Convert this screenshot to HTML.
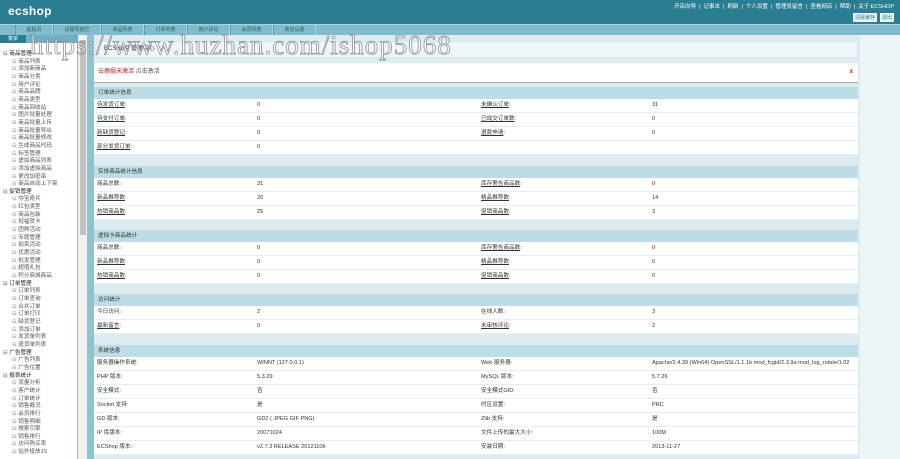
<!DOCTYPE html>
<html><head><meta charset="utf-8"><style>
*{margin:0;padding:0;box-sizing:border-box}
body{width:900px;height:459px;overflow:hidden;background:#eef5f8;font-family:"Liberation Sans","Noto Sans CJK SC",sans-serif;font-size:5.5px;color:#333;position:relative}
.hd{position:absolute;left:0;top:0;width:900px;height:24px;background:#2b7e91}
.logo{position:absolute;left:8px;top:4px;color:#fff;font-size:12px;font-weight:bold;letter-spacing:.3px}
.tl{position:absolute;right:6px;top:2px;color:#fff;font-size:5.5px}
.tl span{margin:0 3px}
.btns{position:absolute;right:6px;top:13px}
.btns b{display:inline-block;background:#e8f2f5;color:#2b7e91;font-weight:normal;font-size:5px;padding:1px 2px;margin-left:3px}
.nav{position:absolute;left:0;top:24px;width:900px;height:11px;background:#80bccb;border-top:1px solid #a8d4df}
.nav span{position:absolute;top:0;height:10px;line-height:10px;text-align:center;color:#2b5b66;font-size:5px;border-left:1px solid #5c9fb0;border-right:1px solid #a8d4df}
.side{position:absolute;left:0;top:35px;width:78px;height:424px;background:#fff;border-right:1px solid #8bbfcc}
.stab{position:absolute;left:0;top:35px;width:26px;height:8px;background:#2b7e91;color:#fff;font-size:5px;text-align:center;line-height:8px}
.sband{position:absolute;left:0;top:35px;width:78px;height:8px;background:#6fb1c1;z-index:0}
.tree{position:absolute;left:3px;top:51px;line-height:7.65px;font-size:5.6px;color:#444;white-space:nowrap}
.tree div.g{color:#222}
.tree div.g:before{content:"⊟ ";color:#666}
.tree div.i{padding-left:9px;color:#555}
.tree div.i:before{content:"⊟ ";color:#999}
.sb{position:absolute;left:79px;top:35px;width:8px;height:424px;background:#f0f0f0}
.thumb{position:absolute;left:80px;top:40px;width:6px;height:195px;background:#c0c0c0}
.band{position:absolute;left:87px;top:35px;width:7px;height:424px;background:#8cc4d2}
.main{position:absolute;left:94px;top:35px;width:766px;height:424px;background:#dcecf1}
.title{position:absolute;left:97px;top:41px;width:761px;height:17px;background:#eef6f9;border:1px solid #d4e7ed;padding-left:6px;line-height:15px;font-size:6px;color:#333}
.alert{position:absolute;left:94px;top:63px;width:764px;height:20px;background:#fff;border-bottom:1px solid #aaa;padding-left:4px;line-height:19px;font-size:6px;color:#555}
.alert em{font-style:normal;color:#b42020}
.alert i{position:absolute;right:5px;top:0;font-style:normal;color:#b42020;font-weight:bold}
.sec{position:absolute;left:94px;width:764px;background:#dcecf1}
.sh{height:13px;background:#bcdde6;line-height:13px;padding-left:4px;color:#333;font-size:5.6px;border-top:1px solid #d6eaf0}
.row{height:14px;background:#fff;border-bottom:1px solid #e4eff3;position:relative;line-height:13px;font-size:5.6px}
.row span{position:absolute;top:0}
.a{left:3px}.b{left:163px}.c{left:387px}.d{left:558px}
u{text-decoration:underline;color:#333}
.r{color:#c00}
.rm{position:absolute;left:860px;top:35px;width:40px;height:424px;background:#eef5f8}
.wm{position:absolute;left:30px;top:30px;font-family:"Liberation Serif",serif;font-size:27px;color:rgba(255,255,255,.5);-webkit-text-stroke:.7px #888;letter-spacing:1px;white-space:nowrap;z-index:10}
</style></head><body>
<div class="hd"><div class="logo">ecshop</div>
<div class="tl">开店向导<span>|</span>记事本<span>|</span>刷新<span>|</span>个人设置<span>|</span>管理员留言<span>|</span>查看网店<span>|</span>帮助<span>|</span>关于 ECSHOP</div>
<div class="btns"><b>清除缓存</b><b>退出</b></div></div>
<div class="nav">
<span style="left:15px;width:38px">起始页</span><span style="left:53px;width:48px">设置导航栏</span><span style="left:101px;width:43px">商品列表</span><span style="left:144px;width:43px">订单列表</span><span style="left:187px;width:43px">用户评论</span><span style="left:230px;width:43px">会员列表</span><span style="left:273px;width:43px">商店设置</span></div>
<div class="side"></div>
<div class="sband"></div>
<div class="stab">菜单</div>
<div class="tree">
<div class="g">商品管理</div><div class="i">商品列表</div><div class="i">添加新商品</div><div class="i">商品分类</div><div class="i">用户评论</div><div class="i">商品品牌</div><div class="i">商品类型</div><div class="i">商品回收站</div><div class="i">图片批量处理</div><div class="i">商品批量上传</div><div class="i">商品批量导出</div><div class="i">商品批量修改</div><div class="i">生成商品代码</div><div class="i">标签管理</div><div class="i">虚拟商品列表</div><div class="i">添加虚拟商品</div><div class="i">更改加密串</div><div class="i">商品自动上下架</div>
<div class="g">促销管理</div><div class="i">夺宝奇兵</div><div class="i">红包类型</div><div class="i">商品包装</div><div class="i">祝福贺卡</div><div class="i">团购活动</div><div class="i">专题管理</div><div class="i">拍卖活动</div><div class="i">优惠活动</div><div class="i">批发管理</div><div class="i">超值礼包</div><div class="i">积分商城商品</div>
<div class="g">订单管理</div><div class="i">订单列表</div><div class="i">订单查询</div><div class="i">合并订单</div><div class="i">订单打印</div><div class="i">缺货登记</div><div class="i">添加订单</div><div class="i">发货单列表</div><div class="i">退货单列表</div>
<div class="g">广告管理</div><div class="i">广告列表</div><div class="i">广告位置</div>
<div class="g">报表统计</div><div class="i">流量分析</div><div class="i">客户统计</div><div class="i">订单统计</div><div class="i">销售概况</div><div class="i">会员排行</div><div class="i">销售明细</div><div class="i">搜索引擎</div><div class="i">销售排行</div><div class="i">访问购买率</div><div class="i">站外投放JS</div>
</div>
<div class="sb"></div><div class="thumb"></div>
<div class="band"></div>
<div class="main"></div>
<div class="rm"></div>
<div class="title">ECSHOP 管理中心</div>
<div class="alert"><em>云摘掘未激活</em> 点击激活<i>x</i></div>

<div class="sec" style="top:86px"><div class="sh">订单统计信息</div>
<div class="row"><span class="a"><u>待发货订单</u>:</span><span class="b r">0</span><span class="c"><u>未确认订单</u>:</span><span class="d">31</span></div>
<div class="row"><span class="a"><u>待支付订单</u>:</span><span class="b">0</span><span class="c"><u>已成交订单数</u>:</span><span class="d">0</span></div>
<div class="row"><span class="a"><u>新缺货登记</u>:</span><span class="b">0</span><span class="c"><u>退款申请</u>:</span><span class="d">0</span></div>
<div class="row"><span class="a"><u>部分发货订单</u>:</span><span class="b">0</span></div></div>

<div class="sec" style="top:165px"><div class="sh">实体商品统计信息</div>
<div class="row"><span class="a">商品总数:</span><span class="b">31</span><span class="c"><u>库存警告商品数</u>:</span><span class="d r">0</span></div>
<div class="row"><span class="a"><u>新品推荐数</u>:</span><span class="b">20</span><span class="c"><u>精品推荐数</u>:</span><span class="d">14</span></div>
<div class="row"><span class="a"><u>热销商品数</u>:</span><span class="b">25</span><span class="c"><u>促销商品数</u>:</span><span class="d">3</span></div></div>

<div class="sec" style="top:229px"><div class="sh">虚拟卡商品统计</div>
<div class="row"><span class="a">商品总数:</span><span class="b">0</span><span class="c"><u>库存警告商品数</u>:</span><span class="d r">0</span></div>
<div class="row"><span class="a"><u>新品推荐数</u>:</span><span class="b">0</span><span class="c"><u>精品推荐数</u>:</span><span class="d">0</span></div>
<div class="row"><span class="a"><u>热销商品数</u>:</span><span class="b">0</span><span class="c"><u>促销商品数</u>:</span><span class="d">0</span></div></div>

<div class="sec" style="top:293px"><div class="sh">访问统计</div>
<div class="row"><span class="a">今日访问:</span><span class="b">2</span><span class="c">在线人数:</span><span class="d">3</span></div>
<div class="row"><span class="a"><u>最新留言</u>:</span><span class="b">0</span><span class="c"><u>未审核评论</u>:</span><span class="d">2</span></div></div>

<div class="sec" style="top:344px"><div class="sh">系统信息</div>
<div class="row"><span class="a">服务器操作系统:</span><span class="b">WINNT (127.0.0.1)</span><span class="c">Web 服务器:</span><span class="d">Apache/2.4.39 (Win64) OpenSSL/1.1.1b mod_fcgid/2.3.9a mod_log_rotate/1.02</span></div>
<div class="row"><span class="a">PHP 版本:</span><span class="b">5.3.29</span><span class="c">MySQL 版本:</span><span class="d">5.7.26</span></div>
<div class="row"><span class="a">安全模式:</span><span class="b">否</span><span class="c">安全模式GID:</span><span class="d">否</span></div>
<div class="row"><span class="a">Socket 支持:</span><span class="b">是</span><span class="c">时区设置:</span><span class="d">PRC</span></div>
<div class="row"><span class="a">GD 版本:</span><span class="b">GD2 ( JPEG GIF PNG)</span><span class="c">Zlib 支持:</span><span class="d">是</span></div>
<div class="row"><span class="a">IP 库版本:</span><span class="b">20071024</span><span class="c">文件上传的最大大小:</span><span class="d">100M</span></div>
<div class="row"><span class="a">ECShop 版本:</span><span class="b">v2.7.3 RELEASE 20121106</span><span class="c">安装日期:</span><span class="d">2013-11-27</span></div></div>

<div class="wm">https://www.huzhan.com/ishop5068</div>
</body></html>
